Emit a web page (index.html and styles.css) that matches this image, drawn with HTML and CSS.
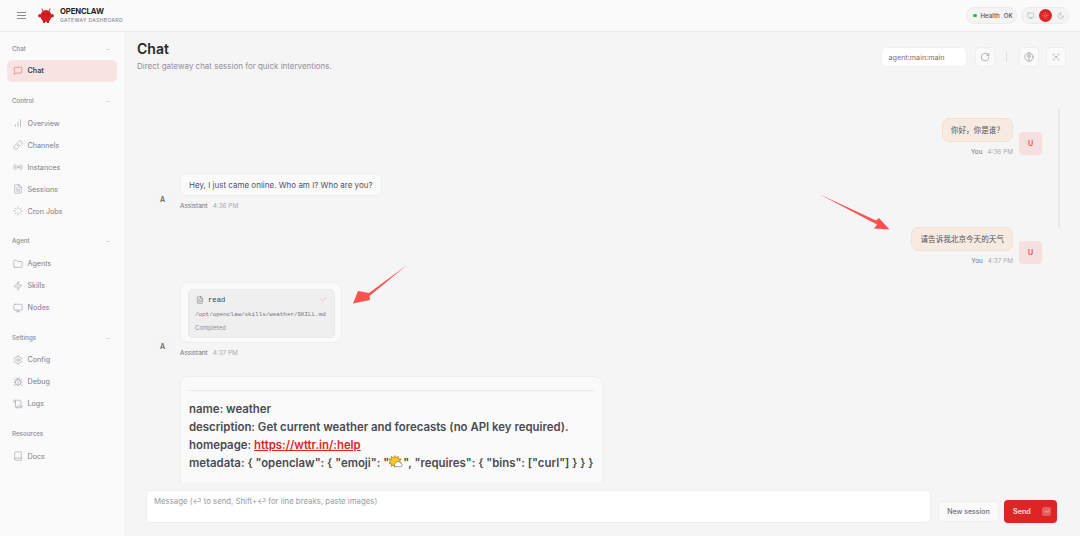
FILE: index.html
```html
<!DOCTYPE html>
<html lang="en">
<head>
<meta charset="utf-8">
<title>OpenClaw Gateway Dashboard</title>
<link rel="stylesheet" href="styles.css">
</head>
<body>
<svg class="sprite" xmlns="http://www.w3.org/2000/svg">
<symbol id="i-msg" viewBox="0 0 24 24"><path d="M21 15a2 2 0 0 1-2 2H7l-4 4V5a2 2 0 0 1 2-2h14a2 2 0 0 1 2 2z"/></symbol>
<symbol id="i-bars" viewBox="0 0 24 24"><path d="M12 20V10M18 20V4M6 20v-4"/></symbol>
<symbol id="i-link" viewBox="0 0 24 24"><path d="M10 13a5 5 0 0 0 7.54.54l3-3a5 5 0 0 0-7.07-7.07l-1.72 1.71"/><path d="M14 11a5 5 0 0 0-7.54-.54l-3 3a5 5 0 0 0 7.07 7.07l1.71-1.71"/></symbol>
<symbol id="i-radio" viewBox="0 0 24 24"><path d="M4.9 19.1C1 15.2 1 8.8 4.9 4.9M7.8 16.2c-2.3-2.3-2.3-6.1 0-8.5M16.2 7.8c2.3 2.3 2.3 6.1 0 8.5M19.1 4.9C23 8.8 23 15.1 19.1 19"/><circle cx="12" cy="12" r="2"/></symbol>
<symbol id="i-file" viewBox="0 0 24 24"><path d="M14.5 2H6a2 2 0 0 0-2 2v16a2 2 0 0 0 2 2h12a2 2 0 0 0 2-2V7.5L14.5 2z"/><path d="M14 2v6h6M16 13H8M16 17H8M10 9H8"/></symbol>
<symbol id="i-loader" viewBox="0 0 24 24"><path d="M12 2v4M12 18v4M4.93 4.93l2.83 2.83M16.24 16.24l2.83 2.83M2 12h4M18 12h4M4.93 19.07l2.83-2.83M16.24 7.76l2.83-2.83"/></symbol>
<symbol id="i-folder" viewBox="0 0 24 24"><path d="M4 20h16a2 2 0 0 0 2-2V8a2 2 0 0 0-2-2h-7.93a2 2 0 0 1-1.66-.9l-.82-1.2A2 2 0 0 0 7.93 3H4a2 2 0 0 0-2 2v13c0 1.1.9 2 2 2Z"/></symbol>
<symbol id="i-zap" viewBox="0 0 24 24"><path d="M13 2 3 14h9l-1 8 10-12h-9l1-8z"/></symbol>
<symbol id="i-monitor" viewBox="0 0 24 24"><rect x="2" y="3" width="20" height="14" rx="2"/><path d="M8 21h8M12 17v4"/></symbol>
<symbol id="i-gear" viewBox="0 0 24 24"><path d="M12.22 2h-.44a2 2 0 0 0-2 2v.18a2 2 0 0 1-1 1.73l-.43.25a2 2 0 0 1-2 0l-.15-.08a2 2 0 0 0-2.73.73l-.22.38a2 2 0 0 0 .73 2.73l.15.1a2 2 0 0 1 1 1.72v.51a2 2 0 0 1-1 1.74l-.15.09a2 2 0 0 0-.73 2.73l.22.38a2 2 0 0 0 2.73.73l.15-.08a2 2 0 0 1 2 0l.43.25a2 2 0 0 1 1 1.73V20a2 2 0 0 0 2 2h.44a2 2 0 0 0 2-2v-.18a2 2 0 0 1 1-1.73l.43-.25a2 2 0 0 1 2 0l.15.08a2 2 0 0 0 2.73-.73l.22-.39a2 2 0 0 0-.73-2.73l-.15-.08a2 2 0 0 1-1-1.74v-.5a2 2 0 0 1 1-1.74l.15-.09a2 2 0 0 0 .73-2.73l-.22-.38a2 2 0 0 0-2.73-.73l-.15.08a2 2 0 0 1-2 0l-.43-.25a2 2 0 0 1-1-1.73V4a2 2 0 0 0-2-2z"/><circle cx="12" cy="12" r="3"/></symbol>
<symbol id="i-bug" viewBox="0 0 24 24"><path d="m8 2 1.88 1.88M14.12 3.88 16 2M9 7.13v-1a3 3 0 1 1 6 0v1M12 20c-3.3 0-6-2.7-6-6v-3a4 4 0 0 1 4-4h4a4 4 0 0 1 4 4v3c0 3.3-2.7 6-6 6M12 20v-9M6.53 9C4.6 8.8 3 7.1 3 5M6 13H2M3 21c0-2.1 1.7-3.9 3.8-4M20.97 5c0 2.1-1.6 3.8-3.5 4M22 13h-4M17.2 17c2.1.1 3.8 1.9 3.8 4"/></symbol>
<symbol id="i-scroll" viewBox="0 0 24 24"><path d="M8 21h12a2 2 0 0 0 2-2v-2H10v2a2 2 0 1 1-4 0V5a2 2 0 1 0-4 0v3h4M19 17V5a2 2 0 0 0-2-2H4"/></symbol>
<symbol id="i-book" viewBox="0 0 24 24"><path d="M4 19.5v-15A2.5 2.5 0 0 1 6.5 2H20v20H6.5a2.5 2.5 0 0 1 0-5H20"/></symbol>
<symbol id="i-refresh" viewBox="0 0 24 24"><path d="M21 12a9 9 0 1 1-9-9c2.52 0 4.93 1 6.74 2.74L21 8"/><path d="M21 3v5h-5"/></symbol>
<symbol id="i-brain" viewBox="0 0 24 24"><circle cx="12" cy="12" r="10"/><path d="M12 2v20M9 7v5M15 7v5"/></symbol>
<symbol id="i-focus" viewBox="0 0 24 24"><path d="M3 7V5a2 2 0 0 1 2-2h2M17 3h2a2 2 0 0 1 2 2v2M21 17v2a2 2 0 0 1-2 2h-2M7 21H5a2 2 0 0 1-2-2v-2"/><circle cx="12" cy="12" r="3"/></symbol>
<symbol id="i-sun" viewBox="0 0 24 24"><circle cx="12" cy="12" r="4"/><path d="M12 2v2M12 20v2M4.93 4.93l1.41 1.41M17.66 17.66l1.41 1.41M2 12h2M20 12h2M6.34 17.66l-1.41 1.41M19.07 4.93l-1.41 1.41"/></symbol>
<symbol id="i-moon" viewBox="0 0 24 24"><path d="M12 3a6 6 0 0 0 9 9 9 9 0 1 1-9-9Z"/></symbol>
<symbol id="i-check" viewBox="0 0 24 24"><path d="M20 6 9 17l-5-5"/></symbol>
<symbol id="i-enter" viewBox="0 0 24 24"><path d="M20 5v7a3 3 0 0 1-3 3H5M10 10l-5 5 5 5"/></symbol>
</svg>

<header class="topbar">
  <div class="brand">
    <button class="menu" aria-label="Menu"><span></span><span></span><span></span></button>
    <svg class="logo" viewBox="0 0 32 32" aria-hidden="true">
      <path d="M10 7 8 1M22 7l2-6" class="logo-ant"/>
      <ellipse cx="16" cy="16" rx="11" ry="12" class="logo-body"/>
      <ellipse cx="4" cy="15.5" rx="4" ry="3.5" class="logo-body"/>
      <ellipse cx="28" cy="15.5" rx="4" ry="3.5" class="logo-body"/>
      <rect x="10" y="26" width="4" height="4" class="logo-body"/>
      <rect x="18" y="26" width="4" height="4" class="logo-body"/>
      <circle cx="12" cy="12" r="1.5" class="logo-eye"/>
      <circle cx="20" cy="12" r="1.5" class="logo-eye"/>
    </svg>
    <div class="brand-text">
      <strong>OPENCLAW</strong>
      <small>GATEWAY DASHBOARD</small>
    </div>
  </div>
  <div class="top-actions">
    <div class="pill health"><i class="dot"></i><span>Health</span><b>OK</b></div>
    <div class="pill theme">
      <svg class="ic ic-theme"><use href="#i-monitor"/></svg>
      <span class="theme-on"><svg class="ic ic-theme-on"><use href="#i-sun"/></svg></span>
      <svg class="ic ic-theme"><use href="#i-moon"/></svg>
    </div>
  </div>
</header>

<div class="shell">
  <nav class="sidebar">
    <section class="nav-group">
      <div class="nav-label"><span>Chat</span><em>−</em></div>
      <a class="nav-item active"><svg class="ic"><use href="#i-msg"/></svg>Chat</a>
    </section>
    <section class="nav-group">
      <div class="nav-label"><span>Control</span><em>−</em></div>
      <a class="nav-item"><svg class="ic"><use href="#i-bars"/></svg>Overview</a>
      <a class="nav-item"><svg class="ic"><use href="#i-link"/></svg>Channels</a>
      <a class="nav-item"><svg class="ic"><use href="#i-radio"/></svg>Instances</a>
      <a class="nav-item"><svg class="ic"><use href="#i-file"/></svg>Sessions</a>
      <a class="nav-item"><svg class="ic"><use href="#i-loader"/></svg>Cron Jobs</a>
    </section>
    <section class="nav-group">
      <div class="nav-label"><span>Agent</span><em>−</em></div>
      <a class="nav-item"><svg class="ic"><use href="#i-folder"/></svg>Agents</a>
      <a class="nav-item"><svg class="ic"><use href="#i-zap"/></svg>Skills</a>
      <a class="nav-item"><svg class="ic"><use href="#i-monitor"/></svg>Nodes</a>
    </section>
    <section class="nav-group">
      <div class="nav-label"><span>Settings</span><em>−</em></div>
      <a class="nav-item"><svg class="ic"><use href="#i-gear"/></svg>Config</a>
      <a class="nav-item"><svg class="ic"><use href="#i-bug"/></svg>Debug</a>
      <a class="nav-item"><svg class="ic"><use href="#i-scroll"/></svg>Logs</a>
    </section>
    <section class="nav-group">
      <div class="nav-label"><span>Resources</span></div>
      <a class="nav-item"><svg class="ic"><use href="#i-book"/></svg>Docs</a>
    </section>
  </nav>

  <main class="main">
    <div class="page-head">
      <div class="page-title">
        <h1>Chat</h1>
        <p>Direct gateway chat session for quick interventions.</p>
      </div>
      <div class="page-tools">
        <div class="session-select">agent:main:main</div>
        <button class="tool"><svg class="ic"><use href="#i-refresh"/></svg></button>
        <i class="tool-sep"></i>
        <button class="tool"><svg class="ic"><use href="#i-brain"/></svg></button>
        <button class="tool tool-last"><svg class="ic"><use href="#i-focus"/></svg></button>
      </div>
    </div>

    <div class="thread">
      <article class="msg user">
        <div class="msg-col">
          <div class="bubble user-bubble">你好，你是谁？</div>
          <div class="meta"><span>You</span><time>4:36 PM</time></div>
        </div>
        <div class="avatar avatar-u">U</div>
      </article>

      <article class="msg bot">
        <div class="avatar">A</div>
        <div class="msg-col">
          <div class="bubble">Hey, I just came online. Who am I? Who are you?</div>
          <div class="meta"><span>Assistant</span><time>4:36 PM</time></div>
        </div>
      </article>

      <article class="msg user">
        <div class="msg-col">
          <div class="bubble user-bubble">请告诉我北京今天的天气</div>
          <div class="meta"><span>You</span><time>4:37 PM</time></div>
        </div>
        <div class="avatar avatar-u">U</div>
      </article>

      <article class="msg bot">
        <div class="avatar">A</div>
        <div class="msg-col">
          <div class="bubble tool-bubble">
            <div class="tool-card">
              <div class="tool-head">
                <svg class="ic ic-read"><use href="#i-file"/></svg>
                <span>read</span>
                <svg class="ic ic-check"><use href="#i-check"/></svg>
              </div>
              <code>/opt/openclaw/skills/weather/SKILL.md</code>
              <div class="tool-status">Completed</div>
            </div>
          </div>
          <div class="meta"><span>Assistant</span><time>4:37 PM</time></div>
        </div>
      </article>

      <article class="msg bot msg-long">
        <div class="avatar-space"></div>
        <div class="bubble doc-bubble">
          <hr>
          <p>name: weather<br>
          description: Get current weather and forecasts (no API key required).<br>
          homepage: <a>https://wttr.in/:help</a><br>
          metadata: { "openclaw": { "emoji": "<svg class="emoji" viewBox="0 0 24 24" aria-hidden="true"><polygon class="emoji-sun" points="10,1 12,5 16,2.5 16,7 21,7 18,10.5 21,14 16,15 16,19.5 12,17 10,21 8,17 4,19.5 4,15 0,14 2.5,10.5 0,7 4,7 4,2.5 8,5"/><path d="M12 20a3.6 3.6 0 0 1 .4-7.1 4.6 4.6 0 0 1 8 1.7A2.8 2.8 0 0 1 21 20z" class="emoji-cloud"/></svg>", "requires": { "bins": ["curl"] } } }</p>
        </div>
      </article>
      <i class="scroll-thumb"></i>
    </div>

    <div class="composer">
      <div class="composer-input">Message (↩ to send, Shift+↩ for line breaks, paste images)</div>
      <button class="btn-new">New session</button>
      <button class="btn-send">Send <span class="kbd"><svg class="ic ic-enter"><use href="#i-enter"/></svg></span></button>
    </div>
  </main>
</div>

<svg class="arrows" viewBox="0 0 1080 536" aria-hidden="true">
  <polygon points="819,194 876,220.5 879,218 889.5,229.5 874,228.5 877,224.5"/>
  <polygon points="407,265 369,293 358,291 353,303.5 370,300 369.5,296"/>
</svg>
</body>
</html>
```
FILE: styles.css
```css
* { box-sizing: border-box; }
html, body { margin: 0; height: 100%; }
body {
  width: 1080px;
  height: 536px;
  overflow: hidden;
  display: flex;
  flex-direction: column;
  background: #f5f5f5;
  color: #3f3f46;
  font-family: Inter, "Noto Sans CJK SC", sans-serif;
  font-size: 7.5px;
}
button { font: inherit; padding: 0; cursor: pointer; }
.sprite { display: none; }

.ic {
  width: 10px;
  height: 10px;
  flex: none;
  fill: none;
  stroke: #a1a1aa;
  stroke-width: 1.5;
  stroke-linecap: round;
  stroke-linejoin: round;
}

/* top bar */
.topbar {
  flex: none;
  height: 32px;
  display: flex;
  align-items: center;
  justify-content: space-between;
  padding: 0 11px 0 17px;
  background: #fafafa;
  border-bottom: 1px solid #e9e9e9;
}
.brand { display: flex; align-items: center; }
.menu {
  width: 9px;
  height: 7px;
  display: flex;
  flex-direction: column;
  justify-content: space-between;
  border: 0;
  background: none;
  margin-right: 12px;
}
.menu span { display: block; height: 1px; background: #8c8c8c; }
.logo { width: 16px; height: 16px; margin-right: 6px; }
.logo-body { fill: #d32027; }
.logo-eye { fill: #7a1015; }
.logo-ant { fill: none; stroke: #d32027; stroke-width: 2; }
.brand-text { display: flex; flex-direction: column; line-height: 8px; padding-top: 1px; }
.brand-text strong { font-size: 7.7px; font-weight: 700; color: #222; letter-spacing: -.1px; }
.brand-text small { font-size: 5px; color: #8a8a94; letter-spacing: .35px; font-weight: 500; }
.top-actions { display: flex; gap: 4px; }
.pill {
  height: 17px;
  display: flex;
  align-items: center;
  background: #f4f4f4;
  border: 1px solid #ebebeb;
  border-radius: 9px;
}
.health { width: 51px; padding-left: 6px; gap: 3px; font-size: 6.2px; font-weight: 500; color: #555; }
.health b { font-weight: 500; color: #52525b; margin-left: 1px; }
.dot { width: 3.5px; height: 3.5px; border-radius: 50%; background: #22b455; margin-right: 1px; }
.theme { width: 48px; padding: 0 4px 0 5px; justify-content: space-between; }
.ic-theme { width: 7.5px; height: 7.5px; }
.theme-on {
  width: 13px;
  height: 13px;
  display: flex;
  align-items: center;
  justify-content: center;
  border-radius: 50%;
  background: #dc2626;
}
.ic-theme-on { width: 7px; height: 7px; stroke: #f9a0a0; }

/* layout */
.shell { flex: 1; min-height: 0; display: flex; }

/* sidebar */
.sidebar {
  flex: none;
  width: 124px;
  padding: 10px 7px 0;
  background: #fafafa;
  display: flex;
  flex-direction: column;
  gap: 13px;
}
.nav-group { display: flex; flex-direction: column; }
.nav-label {
  height: 12px;
  margin-bottom: 5px;
  padding: 0 5px;
  display: flex;
  align-items: center;
  justify-content: space-between;
  font-size: 6.2px;
  font-weight: 500;
  color: #8b8b94;
}
.nav-label em { font-style: normal; color: #c4c4c8; font-size: 6px; margin-right: 2px; }
.nav-item {
  height: 22.1px;
  padding: 1px 7px 0 5px;
  display: flex;
  align-items: center;
  gap: 4.5px;
  font-size: 7.2px;
  font-weight: 400;
  color: #7d7d86;
  border: 1px solid transparent;
  border-radius: 5px;
}
.nav-item.active {
  height: 21.5px;
  margin-top: 1px;
  padding-top: 0;
  color: #3f3f46;
  font-weight: 600;
  background: #f8e3e3;
  border-color: #f7e7e7;
}
.nav-item.active .ic { stroke: #ef6a6a; }

/* main */
.main { flex: 1; min-width: 0; display: flex; flex-direction: column; }
.page-head {
  flex: none;
  height: 54px;
  padding: 8px 14px 0 13px;
  display: flex;
  justify-content: space-between;
}
.page-title h1 { margin: 0; font-size: 14px; line-height: 18px; font-weight: 600; color: #27272a; }
.page-title p { margin: 3px 0 0; font-size: 7.9px; line-height: 10px; color: #8e8e96; letter-spacing: .04px; }
.page-tools { display: flex; align-items: center; height: 20px; margin-top: 7px; }
.session-select {
  width: 86px;
  height: 20px;
  padding-left: 7px;
  display: flex;
  align-items: center;
  margin-right: 8px;
  font-size: 7.2px;
  color: #71717a;
  background: #fff;
  border: 1px solid #f0f0f0;
  border-radius: 4px;
}
.tool {
  width: 20px;
  height: 20px;
  display: flex;
  align-items: center;
  justify-content: center;
  background: #fafafa;
  border: 1px solid #eeeeee;
  border-radius: 4px;
}
.tool-sep { width: 1.5px; height: 10px; margin: 0 12px 0 11px; background: #e2dede; }
.tool-last { margin-left: 7px; }
.tool .ic { stroke: #8a8a92; }
.tool-last .ic { width: 8px; height: 8px; }

/* thread */
.thread {
  position: relative;
  flex: 1;
  min-height: 0;
  overflow: hidden;
  padding: 32px 38px 0 27px;
  display: flex;
  flex-direction: column;
  gap: 16px;
}
.msg { flex: none; display: flex; align-items: flex-end; gap: 6px; }
.msg.user { justify-content: flex-end; }
.msg.bot { gap: 6px; }
.msg-col { display: flex; flex-direction: column; gap: 6px; }
.user .msg-col { align-items: flex-end; }
.bot .msg-col { align-items: flex-start; }
.bubble {
  font-size: 8px;
  line-height: 12px;
  padding: 4.5px 8px;
  height: 23px;
  color: #52525b;
  background: #fafafa;
  border: 1px solid #eeeeee;
  border-radius: 6px;
}
.user-bubble {
  height: 24px;
  font-size: 7.6px;
  padding-top: 5.5px;
  background: #f7ebe1;
  border-color: #f5dfce;
  border-radius: 7px;
  color: #52525b;
}
.avatar, .avatar-space { flex: none; width: 23px; }
.avatar {
  height: 22px;
  margin-bottom: 1px;
  display: flex;
  align-items: center;
  justify-content: center;
  background: #f4f4f4;
  border-radius: 4px;
  font-size: 7px;
  font-weight: 600;
  color: #666;
}
.avatar-u { height: 23px; background: #f5dfdf; color: #e5484d; margin-bottom: 2px; }
.meta { display: flex; gap: 5px; font-size: 6.4px; line-height: 9px; color: #71717a; }
.meta time { color: #a9a9af; }

.tool-bubble { height: 61px; padding: 5.5px 6.5px; border-radius: 8px; }
.tool-card {
  width: 147px;
  height: 49px;
  padding: 4px 6.5px;
  background: #efefef;
  border: 1px solid #e9e9e9;
  border-radius: 5px;
}
.tool-head { height: 12px; display: flex; align-items: center; gap: 4px; font-family: "Liberation Mono", monospace; font-size: 7.2px; font-weight: 400; color: #3f3f46; }
.ic-read { width: 8px; height: 8px; stroke: #71717a; margin-left: 1px; }
.ic-check { width: 7px; height: 7px; stroke: #ef8f8f; margin-left: auto; }
.tool-card code {
  display: block;
  margin-top: 3px;
  font-family: "Liberation Mono", monospace;
  font-size: 5.9px;
  line-height: 12px;
  color: #71717a;
  white-space: nowrap;
}
.tool-status { margin-top: 2px; font-size: 6px; line-height: 10px; color: #90909c; }

.msg-long { margin-top: 1.7px; }
.doc-bubble {
  width: 423px;
  height: 130px;
  flex: none;
  padding: 13px 8px 0;
  border-radius: 8px;
}
.doc-bubble hr { margin: 0 0 9px; border: 0; border-top: 1px solid #e9e9e9; }
.doc-bubble p { margin: 0; font-size: 11.4px; line-height: 18px; font-weight: 600; color: #4a4a52; white-space: nowrap; }
.doc-bubble a { color: #dc2626; text-decoration: underline; }
.emoji { width: 14px; height: 14px; vertical-align: -2.5px; }
.emoji-sun { fill: #f7c81e; stroke: #a87200; stroke-width: 1.2; stroke-linejoin: round; }
.emoji-cloud { fill: #fff; stroke: #666; stroke-width: 1; }

.scroll-thumb {
  position: absolute;
  top: 23px;
  right: 20px;
  width: 2.5px;
  height: 119px;
  background: #e9e9e9;
  border-radius: 2px;
}

/* composer */
.composer {
  flex: none;
  height: 53px;
  padding: 7px 23px 0 22px;
  display: flex;
  align-items: flex-start;
  background: #f5f5f5;
}
.composer-input {
  flex: 1;
  height: 33px;
  margin-right: 7px;
  padding: 5px 7px;
  font-size: 7.8px;
  line-height: 10px;
  color: #9a9aa2;
  background: #fff;
  border: 1px solid #eeeeee;
  border-radius: 4px;
}
.btn-new {
  width: 61px;
  height: 21px;
  margin: 11px 5px 0 0;
  font-size: 7px;
  font-weight: 500;
  color: #71717a;
  background: #fafafa;
  border: 1px solid #eeeeee;
  border-radius: 4px;
}
.btn-send {
  width: 53px;
  height: 22.5px;
  margin-top: 10px;
  padding: 0 6px 0 9px;
  display: flex;
  align-items: center;
  justify-content: space-between;
  font-size: 7.2px;
  font-weight: 600;
  color: #fde2e2;
  background: #dc2626;
  border: 0;
  border-radius: 4px;
}
.kbd { width: 9px; height: 9px; display: flex; align-items: center; justify-content: center; background: #e85b5b; border-radius: 2px; }
.ic-enter { width: 6px; height: 6px; stroke: #fde2e2; }

/* annotation arrows drawn over the screenshot */
.arrows { position: absolute; left: 0; top: 0; width: 1080px; height: 536px; pointer-events: none; fill: #f9524f; }
```
